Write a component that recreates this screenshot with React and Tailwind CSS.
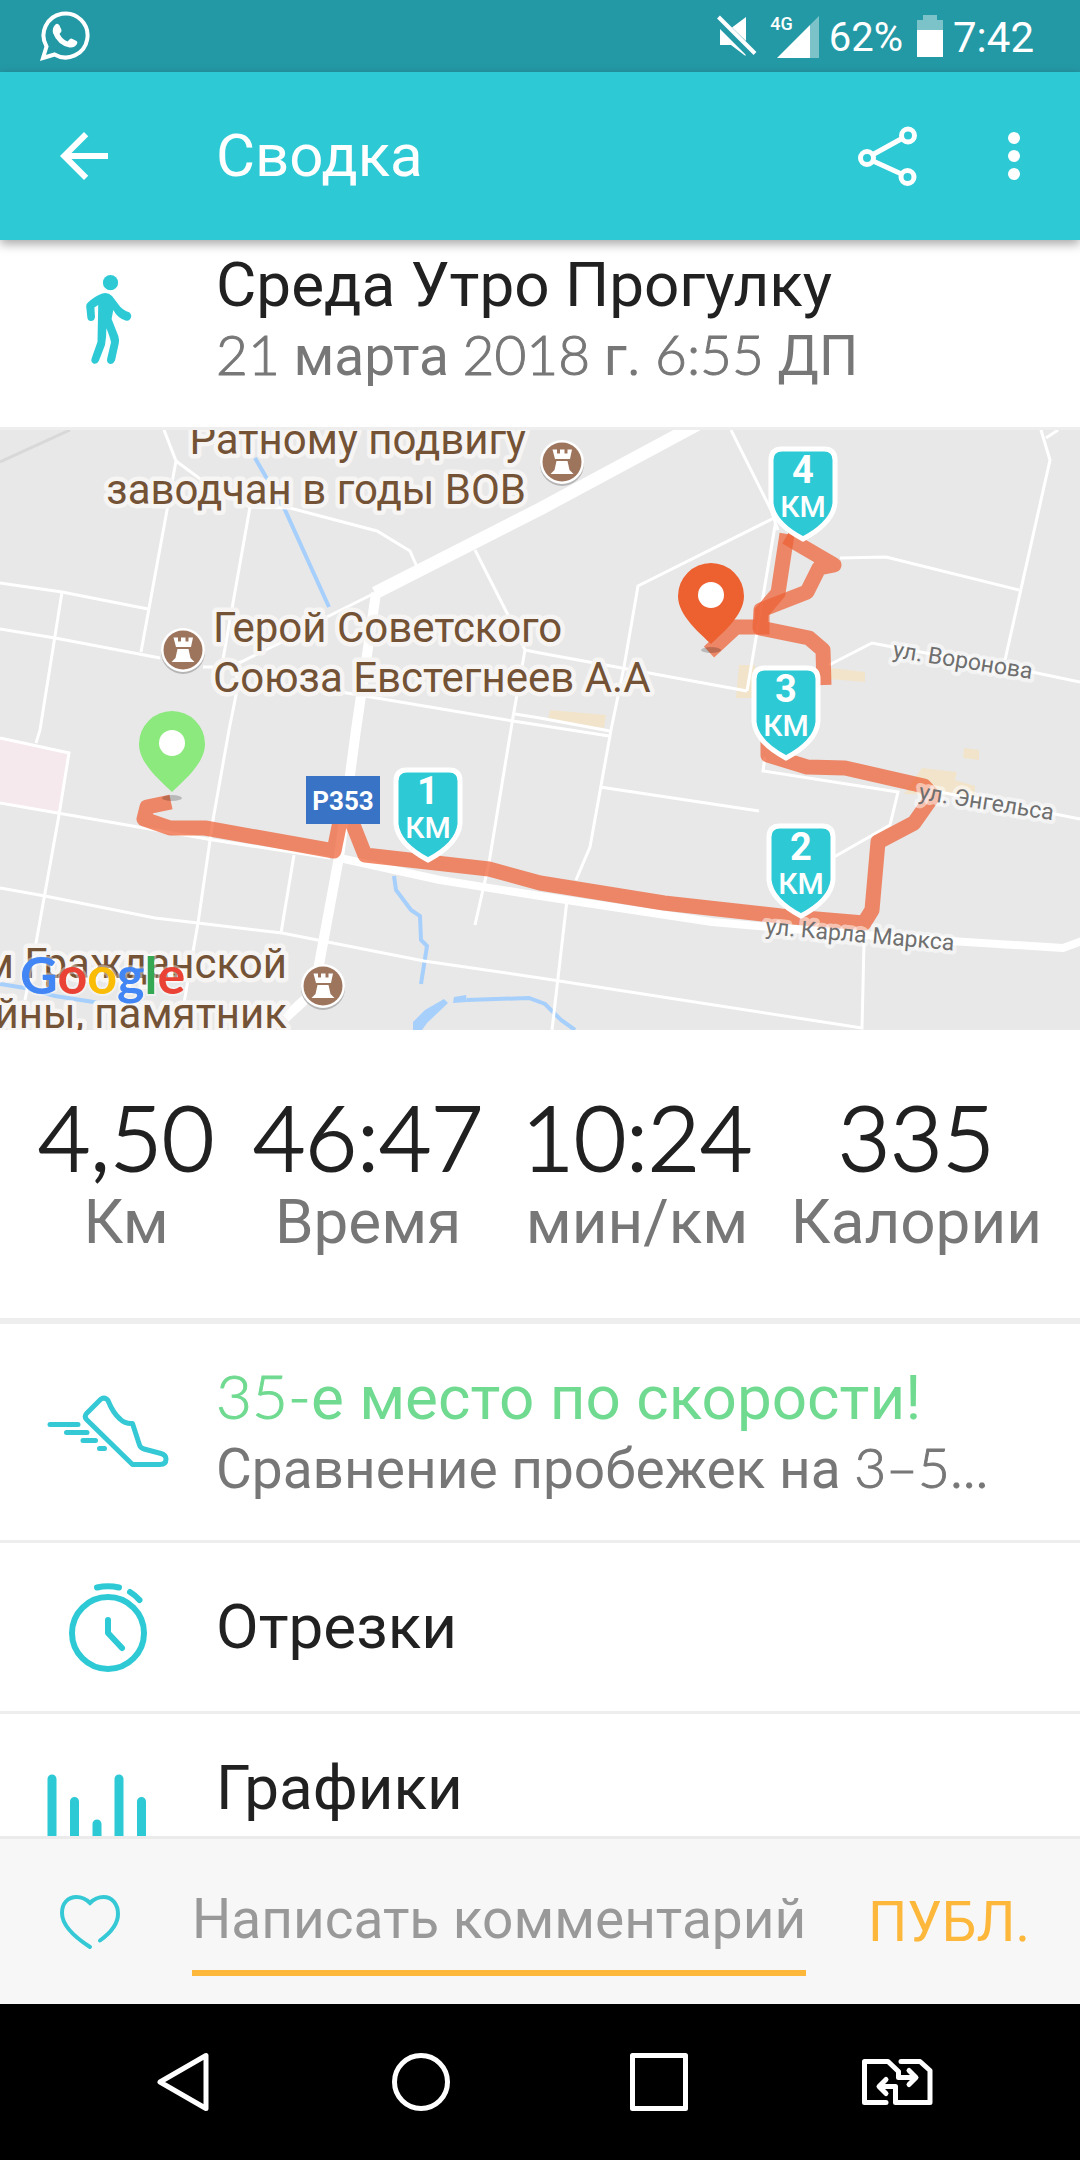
import React, { useState } from 'react';
import { MdArrowBack } from 'react-icons/md';

const stats = [
  { value: '4,50', label: 'Км' },
  { value: '46:47', label: 'Время' },
  { value: '10:24', label: 'мин/км' },
  { value: '335', label: 'Калории' },
];

// Minor streets of the map, thin white lines
const streets = [
  '164,0 176,31 141,222',
  '176,31 203,51 250,77 290,78 377,101 410,121 417,137',
  '250,77 222,235',
  '237,240 236,265 229,300 213,390 198,493 184,573',
  '203,237 220,237 241,232 282,212 327,187 375,163',
  '0,153 62,162 148,179',
  '0,199 55,208 160,228',
  '62,162 40,300 36,313',
  '475,120 508,185 525,220 540,223 747,261',
  '525,220 513,287 489,433 475,495',
  '341,262 513,291 609,306',
  '515,284 540,288 610,301',
  '731,0 771,80 778,100',
  '774,88 638,156 624,237 611,300 590,417 576,450',
  '567,470 552,600',
  '776,90 747,261',
  '840,128 886,127 1019,160',
  '1041,0 1050,30 1005,230',
  '1058,0 1046,8',
  '829,235 872,213 898,218 1032,242 1080,252',
  '0,308 69,323 59,385 36,513 25,570',
  '0,373 213,410 330,428',
  '0,458 45,466 155,488 198,493 282,503 424,531 540,548 862,598 864,513',
  '294,425 281,503',
  '600,357 759,381',
  '765,327 763,341 898,362 890,395 834,427',
  '929,360 1050,383 1080,389',
];

// Numbers inside a line of text are set in a lighter face than the words
function Num({ children }) {
  return <span className="font-[Lato,sans-serif] leading-none font-light [-webkit-text-stroke:1px_currentColor]">{children}</span>;
}

function StatusBar() {
  return (
    <div className="flex h-[72px] shrink-0 items-center justify-between bg-[#2499a6] pr-[46px] pl-10 text-white">
      <svg className="h-[50px] w-[50px]" viewBox="0 0 50 50" aria-hidden="true">
        <path
          d="M3 47 L6.5 35.5 A22 22 0 1 1 14.5 43.5 Z"
          fill="none"
          stroke="white"
          strokeWidth="4"
          strokeLinejoin="miter"
        />
        <path
          d="M15 14 q2.500 -2.500 4.500 .5 l2 4.500 q.5 1.500 -2 4 q3 5.500 8 7.500 l2.500 -2.500 q1 -.8 2.500 0 l4 2 q1.500 1 .5 3 q-2.500 4 -7.500 3.500 q-12 -2.500 -16.500 -14.500 q-1 -5 2 -8 Z"
          fill="white"
        />
      </svg>
      <div className="flex items-center">
        <svg className="h-11 w-11" viewBox="0 0 44 44" fill="white" aria-hidden="true">
          <path d="M6 15 V31 H17 L31.500 42 V40.500 Z" />
          <path d="M18 13.500 L32 3 V27 Z" />
          <path d="M4.500 3 L41 39.500" stroke="white" strokeWidth="4" />
        </svg>
        <div className="ml-3 flex items-start">
          <span className="-mr-4 text-[18px] leading-5 font-medium">4G</span>
          <svg className="h-11 w-11" viewBox="0 0 44 44" aria-hidden="true">
            <path d="M0 44 L33 11 V44 Z" fill="white" />
            <path d="M33 11 L42 2 V44 H33 Z" fill="white" fillOpacity=".4" />
          </svg>
        </div>
        <span className="ml-2 pt-1 text-[40px] leading-[46px]">62%</span>
        <svg className="ml-[14px] h-[42px] w-[26px]" viewBox="0 0 26 42" fill="white" aria-hidden="true">
          <path d="M0 5 H6 V0 H20 V5 H26 V15 H0 Z" fillOpacity=".4" />
          <path d="M0 15 H26 V42 H0 Z" />
        </svg>
        <span className="ml-[10px] pt-1 text-[42px] leading-[46px]">7:42</span>
      </div>
    </div>
  );
}

function AppBar() {
  return (
    <header className="relative z-10 flex h-[168px] shrink-0 items-center bg-[#2dcad6] pr-12 pl-12 text-white shadow-[0_4px_10px_rgba(0,0,0,0.35)]">
      <button type="button" aria-label="Назад" className="mr-24">
        <MdArrowBack className="size-[72px]" />
      </button>
      <h1 className="flex-1 text-[60px] leading-[72px]">Сводка</h1>
      <button type="button" aria-label="Поделиться" className="mr-[77px]">
        <svg className="h-[62px] w-[62px]" viewBox="0 0 62 62" fill="none" stroke="white" strokeWidth="5" aria-hidden="true">
          <circle cx="10" cy="33" r="6.500" />
          <circle cx="51" cy="10.500" r="6.500" />
          <circle cx="50.500" cy="52" r="6.500" />
          <path d="M16 29.500 L45 13.500 M16 36 L44.500 49" />
        </svg>
      </button>
      <button type="button" aria-label="Ещё">
        <svg className="h-[62px] w-9" viewBox="0 0 36 62" fill="white" aria-hidden="true">
          <circle cx="18" cy="13" r="6" />
          <circle cx="18" cy="31" r="6" />
          <circle cx="18" cy="49" r="6" />
        </svg>
      </button>
    </header>
  );
}

function WalkIcon() {
  return (
    <svg className="h-24 w-[50px]" viewBox="0 0 50 96" fill="#2dcad6" aria-hidden="true">
      <circle cx="27.500" cy="10.700" r="7.600" />
      <path d="M5 30.500 Q12 24 19.300 21.500 Q25 20 29 24 L37.200 34.700 Q40 38 46.200 40.300 Q49.500 43 47.500 46.500 Q46 49.500 42.500 48.500 Q34.500 46 30.300 38 L28.600 47 L35.300 64 Q36.500 68 35.800 71.300 L32 88.500 Q30 92.500 27 92 Q23.500 91 24.100 87 L28 70.300 Q27 65 23.400 56.300 Q23.400 66 22 73 L16 88.500 Q14 92.500 10.700 91.700 Q7.500 90 8.600 86.500 L14.500 69.700 L15.200 33 L11.400 35.500 L12 45 Q11.500 49 8 49 Q4.500 49 4.300 45 L3.200 34.500 Q3 32 5 30.500 Z" />
    </svg>
  );
}

function ShoeIcon() {
  return (
    <svg className="h-[76px] w-[124px]" viewBox="0 0 124 76" fill="none" stroke="#35c9d6" strokeWidth="5" strokeLinecap="round" strokeLinejoin="round" aria-hidden="true">
      <path d="M4 30.500 H32 M20.500 38.500 H41 M37 46.500 H49.500 M53.500 54.500 H58.500" />
      <path d="M55 5 L40.500 19.500 Q38 22.500 40.500 25.500 L86.500 70.500 H114 Q120 70.500 120 65 Q120 61 115 59.500 L98 55 Q94.500 54 93.500 51 L86.500 29.500 Q79 30 74 25 Q67 19 62 6.500 Q59 2.500 55 5 Z" />
    </svg>
  );
}

function StopwatchIcon() {
  return (
    <svg className="h-[94px] w-[84px]" viewBox="0 0 84 94" fill="none" stroke="#2dcad6" strokeWidth="6" strokeLinecap="round" strokeLinejoin="round" aria-hidden="true">
      <circle cx="42" cy="53" r="36" />
      <path d="M31 7.500 Q42 5 53 7.500 M64 12 Q69 15 73.500 20" />
      <path d="M42 40 V53 L56 68" />
    </svg>
  );
}

function BarsIcon() {
  return (
    <svg className="h-24 w-[122px]" viewBox="0 0 122 96" fill="none" stroke="#2dcad6" strokeWidth="9" strokeLinecap="round" aria-hidden="true">
      <path d="M5 5 V90 M27.500 27.500 V90 M50 50 V90 M72 5 V90 M94.500 27.500 V90" />
    </svg>
  );
}

function Poi({ x, y }) {
  return (
    <g transform={`translate(${x} ${y})`}>
      <circle cy="2" r="22" fill="#b5b5b5" />
      <circle r="22" fill="white" />
      <circle r="19.500" fill="#9d755d" />
      <path d="M-9.500 -12.500 h4.500 v4 h3 v-4 h4.500 v4 h3 v-4 h4.500 l-2 9.500 h-15 Z M-5.500 -1 h11 l2 9 l4 4 h-23 l4 -4 Z" fill="white" />
    </g>
  );
}

function Pin({ x, y, color }) {
  return (
    <g transform={`translate(${x} ${y})`}>
      <ellipse cy="6" rx="10" ry="3" fill="black" fillOpacity=".2" />
      <path d="M0 0 C-10 -10 -33 -28 -33 -48 A33 33 0 0 1 33 -48 C33 -28 10 -10 0 0 Z" fill={color} />
      <circle cy="-49" r="13" fill="white" />
    </g>
  );
}

function KmMarker({ x, y, km }) {
  return (
    <g transform={`translate(${x} ${y})`}>
      <path
        d="M13 2 H55 Q66 2 66 13 V56 Q64 76 34 92 Q4 76 2 56 V13 Q2 2 13 2 Z"
        fill="#2dcad6"
        stroke="white"
        strokeWidth="5"
      />
      <text x="34" y="36" textAnchor="middle" fill="white" className="text-[38px] font-bold">{km}</text>
      <text x="34" y="70" textAnchor="middle" fill="white" className="text-[30px] font-medium">КМ</text>
    </g>
  );
}

function RouteMap() {
  return (
    <svg className="block w-full" viewBox="0 0 1080 600" role="img" aria-label="Карта маршрута">
      <rect width="1080" height="600" fill="#e8e8e8" />

      {/* Areas and buildings */}
      <path d="M0 308 L69 323 L59 383 L0 373 Z" fill="#f5e9ee" />
      <g fill="#f1e4cb">
        <path d="M739 235 H755 V268 H736 Z" />
        <path d="M831 238 L865 242 V252 L829 249 Z" />
        <path d="M550 280 L606 285 L604 298 L548 290 Z" />
        <path d="M964 318 L979 320 V330 L963 328 Z" />
        <path d="M922 338 L957 342 L955 350 L975 356 V366 L904 364 Z" />
      </g>

      {/* Water */}
      <g fill="none" stroke="#a6cffc" strokeWidth="4">
        <path d="M255 28 L285 80 L329 177" />
        <path d="M394 446 L396 460 L411 480 L420 486 L421 510 L427 516 L421 554" />
        <path d="M467 570 L529 568 L545 574 L561 590 L575 600" />
        <path d="M0 554 L25 558 L55 566 L100 573" />
      </g>
      <path d="M413 600 V592 L425 580 L444 569 L448 573 L427 593 L422 600 Z M454 567 L466 565 L467 572 L453 573 Z" fill="#a6cffc" />

      {/* Roads */}
      <path d="M0 32 L70 0" fill="none" stroke="#d8d8d8" strokeWidth="3" />
      <g fill="none" stroke="white" strokeWidth="3">
        {streets.map((points) => (
          <polyline key={points} points={points} />
        ))}
      </g>
      <g fill="none" stroke="white" strokeLinejoin="round">
        <path d="M700 -7 L540 79 L375 163" strokeWidth="13" />
        <path d="M376 163 L356 300 L339 427 L318 540 L310 565 L285 588" strokeWidth="10" />
        <path d="M335 427 L440 450 L540 466 L712 492 L864 505 L950 511 L1063 518 L1085 510" strokeWidth="8" />
      </g>

      {/* Walked route */}
      <g fill="none" stroke="#ed6235" strokeOpacity=".73" strokeWidth="15">
        <path d="M171 372 L147 377 L144 389 L170 398 L205 398 L334 421 L344 372 L365 425 L489 439 L540 453 L664 473 L781 486 L864 493 L872 480 L878 412 L914 393 L933 366 L924 356 L845 338 L807 337 L768 325 V308" strokeLinejoin="round" />
        <path d="M824 255 L823 220 L809 208 L760 198 L761 180 L807 162 L819 138 L834 135 L786 107" strokeLinejoin="round" />
        <path d="M787 104 L778 163 L762 182 L762 197 L736 197 L709 222" />
      </g>

      {/* Place names */}
      <g fill="#745235" stroke="#f6f5f4" strokeWidth="9" strokeLinejoin="round" paintOrder="stroke" className="text-[42px]">
        <text x="526" y="24" textAnchor="end">Ратному подвигу</text>
        <text x="526" y="74" textAnchor="end">заводчан в годы ВОВ</text>
        <text x="213" y="212">Герой Советского</text>
        <text x="213" y="262">Союза Евстегнеев А.А</text>
        <text x="287" y="548" textAnchor="end">м Гражданской</text>
        <text x="287" y="598" textAnchor="end">йны, памятник</text>
      </g>
      <g fill="#6f6f6f" stroke="white" strokeOpacity=".5" strokeWidth="8" strokeLinejoin="round" paintOrder="stroke" className="text-[23px]">
        <text transform="translate(892 227) rotate(9)">ул. Воронова</text>
        <text transform="translate(918 369) rotate(9)">ул. Энгельса</text>
        <text transform="translate(765 504) rotate(5)">ул. Карла Маркса</text>
      </g>

      <Poi x={183} y={220} />
      <Poi x={562} y={32} />
      <Poi x={323} y={556} />

      <rect x="306" y="346" width="74" height="48" fill="#3873c6" />
      <text x="343" y="380" textAnchor="middle" fill="white" className="text-[26px] font-bold">Р353</text>

      <KmMarker x={394} y={338} km={1} />
      <KmMarker x={767} y={394} km={2} />
      <KmMarker x={752} y={236} km={3} />
      <KmMarker x={769} y={17} km={4} />
      <Pin x={172} y={362} color="#8ce97d" />
      <Pin x={711} y={214} color="#ed6030" />

      <text x="20" y="564" stroke="white" strokeOpacity=".4" strokeWidth="4" paintOrder="stroke" className="font-[Lato,sans-serif] text-[52px] font-bold">
        <tspan fill="#4285f4">G</tspan>
        <tspan fill="#ea4335">o</tspan>
        <tspan fill="#fbbc05">o</tspan>
        <tspan fill="#4285f4">g</tspan>
        <tspan fill="#34a853">l</tspan>
        <tspan fill="#ea4335">e</tspan>
      </text>
    </svg>
  );
}

function Row({ icon, children }) {
  return (
    <li className="flex border-b-[3px] border-[#eeeeee]">
      <div className="flex w-[216px] shrink-0 items-center justify-center">{icon}</div>
      {children}
    </li>
  );
}

function CommentBar() {
  const [comment, setComment] = useState('');

  return (
    <form className="flex h-[168px] shrink-0 items-center border-t-[3px] border-[#ebebeb] bg-[#f7f7f7] pr-[50px] pl-[58px]" onSubmit={(e) => e.preventDefault()}>
      <button type="button" aria-label="Нравится" className="mr-[70px]">
        <svg className="h-[60px] w-16" viewBox="0 0 64 60" fill="none" stroke="#35c9d6" strokeWidth="4" strokeLinecap="round" aria-hidden="true">
          <path d="M32 55 C18 46 4 34 4 21 C4 11 10 5 18.500 5 Q26 5 32 11 Q38 5 45.500 5 C54 5 60 12 60 22 C60 33 51 42 42 48.500" />
        </svg>
      </button>
      <input
        type="text"
        aria-label="Написать комментарий"
        placeholder="Написать комментарий"
        value={comment}
        onChange={(e) => setComment(e.target.value)}
        className="h-[108px] min-w-0 flex-1 border-b-[6px] border-[#fdb73a] text-[55px] leading-[70px] text-[#212121] outline-none placeholder:text-[#999999]"
      />
      <button type="submit" className="ml-[62px] text-[55px] leading-[70px] text-[#fdb73a]">ПУБЛ.</button>
    </form>
  );
}

function NavBar() {
  return (
    <nav className="grid h-[156px] shrink-0 grid-cols-4 items-center justify-items-center bg-black px-16 text-white">
      <button type="button" aria-label="Назад">
        <svg className="h-[60px] w-[56px]" viewBox="0 0 56 60" fill="none" stroke="white" strokeWidth="5" strokeLinejoin="round" aria-hidden="true">
          <path d="M5 30 L51 3.500 V56.500 Z" />
        </svg>
      </button>
      <button type="button" aria-label="Домой">
        <svg className="h-[60px] w-[60px]" viewBox="0 0 60 60" fill="none" stroke="white" strokeWidth="5" aria-hidden="true">
          <circle cx="30" cy="30" r="26.500" />
        </svg>
      </button>
      <button type="button" aria-label="Недавние">
        <svg className="h-[60px] w-[60px]" viewBox="0 0 60 60" fill="none" stroke="white" strokeWidth="5" strokeLinejoin="round" aria-hidden="true">
          <rect x="3.500" y="3.500" width="53" height="53" />
        </svg>
      </button>
      <button type="button" aria-label="Сменить SIM">
        <svg className="h-[52px] w-[78px]" viewBox="0 0 78 52" fill="none" stroke="white" strokeWidth="5" strokeLinecap="round" strokeLinejoin="round" aria-hidden="true">
          <path d="M28 46.500 H6.500 V5.500 H30 L40.500 15.500 V21.500 H57 M51 14.500 L58 21.500 L51 28.500" />
          <path d="M43 5.500 H62 L72 14.500 V46.500 H37.500 V30.500 H21.500 M28 23.500 L21 30.500 L28 37.500" />
        </svg>
      </button>
    </nav>
  );
}

function App() {
  return (
    <div className="flex h-screen flex-col bg-white font-[Roboto,sans-serif]">
      <StatusBar />
      <AppBar />

      <main className="min-h-0 flex-1 overflow-hidden">
        <section className="flex border-b-[3px] border-[#eeeeee]">
          <div className="flex w-[216px] shrink-0 items-start justify-center pt-8">
            <WalkIcon />
          </div>
          <div className="pt-[9px] pb-9">
            <h2 className="text-[62px] leading-[72px] text-[#212121]">Среда Утро Прогулку</h2>
            <p className="text-[55px] leading-[70px] text-[#777777]">
              <Num>21</Num> марта <Num>2018</Num> г. <Num>6:55</Num> ДП
            </p>
          </div>
        </section>

        <RouteMap />

        <dl className="flex justify-between border-b-[6px] border-[#eeeeee] px-[38px] pt-14 pb-[60px]">
          {stats.map((stat) => (
            <div key={stat.label} className="flex flex-col-reverse items-center">
              <dt className="text-[62px] leading-[72px] text-[#777777]">{stat.label}</dt>
              <dd className="font-[Lato,sans-serif] text-[90px] leading-[100px] font-light text-[#212121] [-webkit-text-stroke:2px_currentColor]">{stat.value}</dd>
            </div>
          ))}
        </dl>

        <ul>
          <Row icon={<ShoeIcon />}>
            <div className="min-w-0 pt-[38px] pr-9 pb-9">
              <p className="text-[62px] leading-[72px] text-[#6fda90]">
                <Num>35-</Num>е место по скорости!
              </p>
              <p className="text-[55px] leading-[70px] text-[#777777]">
                Сравнение пробежек на <Num>3–5...</Num>
              </p>
            </div>
          </Row>
          <Row icon={<StopwatchIcon />}>
            <p className="py-12 text-[62px] leading-[72px] text-[#212121]">Отрезки</p>
          </Row>
          <Row icon={<BarsIcon />}>
            <p className="pt-[38px] pb-[106px] text-[62px] leading-[72px] text-[#212121]">Графики</p>
          </Row>
        </ul>
      </main>

      <CommentBar />
      <NavBar />
    </div>
  );
}

export default App;
